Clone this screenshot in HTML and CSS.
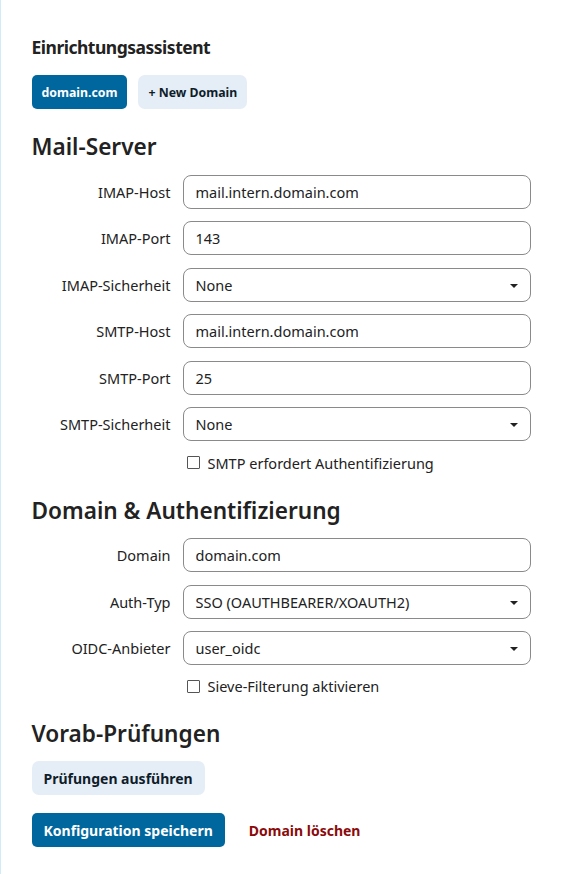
FILE: index.html
```html
<!DOCTYPE html>
<html lang="de">
<head>
<meta charset="utf-8">
<title>Einrichtungsassistent</title>
<link rel="stylesheet" href="styles.css">
</head>
<body>
<div class="page">
  <h2 class="title">Einrichtungsassistent</h2>
  <div class="tabs">
    <button class="btn btn-primary">domain.com</button>
    <button class="btn btn-light">+ New Domain</button>
  </div>

  <h3 class="section">Mail-Server</h3>
  <div class="form">
    <label class="lbl">IMAP-Host</label>
    <div class="field">mail.intern.domain.com</div>
    <label class="lbl">IMAP-Port</label>
    <div class="field">143</div>
    <label class="lbl">IMAP-Sicherheit</label>
    <div class="field select">None<span class="caret"></span></div>
    <label class="lbl">SMTP-Host</label>
    <div class="field">mail.intern.domain.com</div>
    <label class="lbl">SMTP-Port</label>
    <div class="field">25</div>
    <label class="lbl">SMTP-Sicherheit</label>
    <div class="field select">None<span class="caret"></span></div>
    <span></span>
    <div class="check"><span class="box"></span>SMTP erfordert Authentifizierung</div>
  </div>

  <h3 class="section">Domain &amp; Authentifizierung</h3>
  <div class="form">
    <label class="lbl">Domain</label>
    <div class="field">domain.com</div>
    <label class="lbl">Auth-Typ</label>
    <div class="field select">SSO (OAUTHBEARER/XOAUTH2)<span class="caret"></span></div>
    <label class="lbl">OIDC-Anbieter</label>
    <div class="field select">user_oidc<span class="caret"></span></div>
    <span></span>
    <div class="check"><span class="box"></span>Sieve-Filterung aktivieren</div>
  </div>

  <h3 class="section">Vorab-Prüfungen</h3>
  <div class="row">
    <button class="btn btn-light btn-lg">Prüfungen ausführen</button>
  </div>
  <div class="row actions">
    <button class="btn btn-primary btn-lg">Konfiguration speichern</button>
    <button class="btn btn-link">Domain löschen</button>
  </div>
</div>
</body>
</html>
```

FILE: styles.css
```css
html, body {
  margin: 0;
  padding: 0;
  background: #ffffff;
}
body {
  font-family: "Noto Sans", "Open Sans", sans-serif;
  color: #222222;
}
.page {
  border-left: 1.5px solid #d3ebf8;
  min-height: 874px;
  box-sizing: border-box;
  padding: 34px 30px 0 30.5px;
}
.title {
  margin: 0;
  font-size: 17.5px;
  letter-spacing: -0.5px;
  font-weight: 700;
  line-height: 26px;
  color: #222;
}
.tabs {
  display: flex;
  gap: 11px;
  margin-top: 15px;
}
.btn {
  font-family: inherit;
  border: 0;
  border-radius: 5px;
  height: 34px;
  padding: 0 10px;
  font-size: 12.3px;
  font-weight: 700;
  cursor: pointer;
}
.btn-primary {
  background: #00679e;
  color: #ffffff;
}
.btn-light {
  background: #e5eef6;
  color: #0f1d2b;
  border-radius: 7px;
}
.btn-lg {
  font-size: 14px;
  padding: 0 12px;
}
.btn-link {
  background: transparent;
  color: #8a0b0b;
  font-size: 14px;
  padding: 0 12px;
}
.section {
  margin: 22px 0 0 0;
  font-size: 22.6px;
  font-weight: 600;
  line-height: 32px;
  color: #222;
}
.form {
  display: grid;
  grid-template-columns: 139px 348px;
  column-gap: 12px;
  row-gap: 12.6px;
  align-items: center;
  margin-top: 11.5px;
}
.lbl {
  text-align: right;
  font-size: 14.5px;
  color: #222;
}
.field {
  position: relative;
  box-sizing: border-box;
  height: 34px;
  border: 1px solid #8a8a8a;
  border-radius: 8px;
  padding: 0 12px;
  display: flex;
  align-items: center;
  font-size: 14.5px;
  color: #222;
}
.caret {
  position: absolute;
  right: 12px;
  top: 15px;
  width: 0;
  height: 0;
  border-left: 4px solid transparent;
  border-right: 4px solid transparent;
  border-top: 4px solid #222;
}
.check {
  display: flex;
  align-items: center;
  gap: 8px;
  font-size: 14.5px;
  margin-top: -1.5px;
  padding-left: 4px;
}
.box {
  width: 13px;
  height: 13px;
  box-sizing: border-box;
  border: 1px solid #555;
  border-radius: 1px;
  background: #fff;
}
.row {
  display: flex;
  gap: 12px;
  margin-top: 11px;
}
.actions {
  margin-top: 18px;
}
```
